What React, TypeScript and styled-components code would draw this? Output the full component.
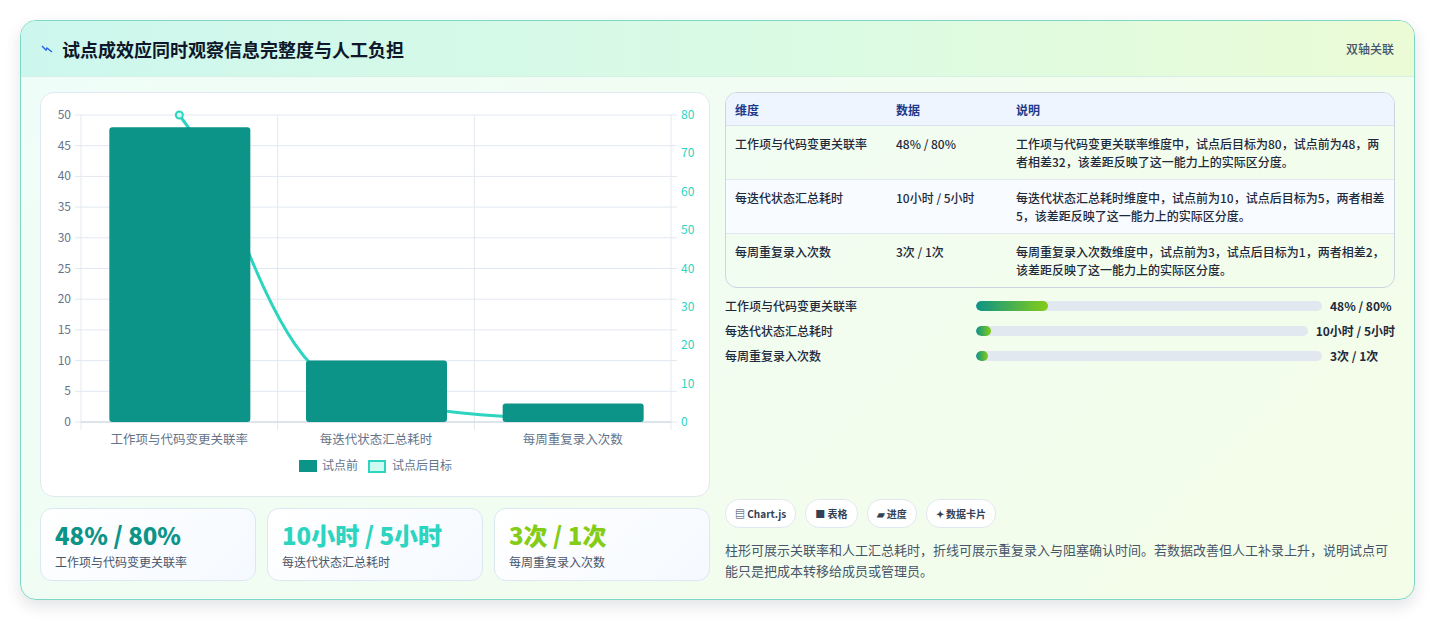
import styled, { createGlobalStyle } from 'styled-components';

const Global = createGlobalStyle`
  body {
    margin: 0;
    background: #f3f4f6;
    font-family: "Noto Sans CJK SC", "Noto Sans", sans-serif;
  }
`;

const rows = [
  {
    name: '工作项与代码变更关联率',
    data: '48% / 80%',
    desc: '工作项与代码变更关联率维度中，试点后目标为80，试点前为48，两者相差32，该差距反映了这一能力上的实际区分度。',
    fill: 72,
  },
  {
    name: '每迭代状态汇总耗时',
    data: '10小时 / 5小时',
    desc: '每迭代状态汇总耗时维度中，试点前为10，试点后目标为5，两者相差5，该差距反映了这一能力上的实际区分度。',
    fill: 15,
  },
  {
    name: '每周重复录入次数',
    data: '3次 / 1次',
    desc: '每周重复录入次数维度中，试点前为3，试点后目标为1，两者相差2，该差距反映了这一能力上的实际区分度。',
    fill: 12,
  },
];

const kpis = [
  { v: '48% / 80%', l: '工作项与代码变更关联率', c: '#0d9488' },
  { v: '10小时 / 5小时', l: '每迭代状态汇总耗时', c: '#2dd4bf' },
  { v: '3次 / 1次', l: '每周重复录入次数', c: '#84cc16' },
];

function Chart() {
  const x0 = 40, x1 = 630, y0 = 22, y1 = 329;
  const cw = (x1 - x0) / 3;
  const yl = (v: number) => y1 - (v / 50) * (y1 - y0);
  const yr = (v: number) => y1 - (v / 80) * (y1 - y0);
  const bars = [48, 10, 3];
  const cx = [0, 1, 2].map((i) => x0 + cw * (i + 0.5));
  const p = [80, 5, 1].map((v, i) => [cx[i], yr(v)]);
  return (
    <svg width="670" height="403" viewBox="0 0 670 403">
      {Array.from({ length: 11 }, (_, i) => (
        <g key={i}>
          <line x1={x0 - 6} x2={x1 + 6} y1={yl(i * 5)} y2={yl(i * 5)} stroke="#e2e8f0" />
          <text x={x0 - 10} y={yl(i * 5) + 4} fontSize="12" fill="#64748b" textAnchor="end">{i * 5}</text>
        </g>
      ))}
      {[0, 10, 20, 30, 40, 50, 60, 70, 80].map((v) => (
        <text key={v} x={x1 + 10} y={yr(v) + 4} fontSize="12" fill="#2dd4bf">{v}</text>
      ))}
      {[0, 1, 2, 3].map((i) => (
        <line key={i} x1={x0 + cw * i} x2={x0 + cw * i} y1={y0} y2={y1 + 8} stroke="#e2e8f0" />
      ))}
      <line x1={x0} x2={x1} y1={y1} y2={y1} stroke="#cbd5e1" />
      <path
        d={`M${p[0][0]},${p[0][1]} C${p[0][0] + 70},${p[0][1] + 90} ${p[1][0] - 110},${p[1][1] - 20} ${p[1][0]},${p[1][1]} C${p[1][0] + 80},${p[1][1] + 10} ${p[2][0] - 80},${p[2][1]} ${p[2][0]},${p[2][1]}`}
        fill="none"
        stroke="#2dd4bf"
        strokeWidth="3"
      />
      <circle cx={p[0][0]} cy={p[0][1]} r="3.5" fill="#ccfbf1" stroke="#2dd4bf" strokeWidth="2" />
      {bars.map((v, i) => (
        <rect key={i} x={cx[i] - 70} y={yl(v)} width="141" height={y1 - yl(v)} rx="3" fill="#0d9488" />
      ))}
      {rows.map((r, i) => (
        <text key={i} x={cx[i]} y={y1 + 22} fontSize="12.5" fill="#64748b" textAnchor="middle">{r.name}</text>
      ))}
      <rect x="258" y="367" width="18" height="12" fill="#0d9488" />
      <text x="281" y="377" fontSize="12" fill="#64748b">试点前</text>
      <rect x="328" y="368" width="16" height="11" fill="#ccfbf1" stroke="#2dd4bf" strokeWidth="2" />
      <text x="351" y="377" fontSize="12" fill="#64748b">试点后目标</text>
    </svg>
  );
}

export default function App() {
  return (
    <>
      <Global />
      <Page>
        <Card>
          <Header>
            <Title>
              <svg width="12" height="8" viewBox="0 0 12 8" style={{ marginRight: 9 }}>
                <path d="M1 1 L5 5 L6 3 L11 7" fill="none" stroke="#2563eb" strokeWidth="1.4" />
              </svg>
              试点成效应同时观察信息完整度与人工负担
            </Title>
            <Tag>双轴关联</Tag>
          </Header>
          <Body>
            <Col>
              <ChartBox>
                <Chart />
              </ChartBox>
              <Kpis>
                {kpis.map((k) => (
                  <Kpi key={k.l}>
                    <KpiValue color={k.c}>{k.v}</KpiValue>
                    <KpiLabel>{k.l}</KpiLabel>
                  </Kpi>
                ))}
              </Kpis>
            </Col>
            <Col>
              <Table>
                <colgroup>
                  <col style={{ width: 161 }} />
                  <col style={{ width: 120 }} />
                  <col />
                </colgroup>
                <thead>
                  <tr>
                    <Th>维度</Th>
                    <Th>数据</Th>
                    <Th>说明</Th>
                  </tr>
                </thead>
                <tbody>
                  {rows.map((r, i) => (
                    <Tr key={r.name} alt={i % 2 === 1}>
                      <Td>{r.name}</Td>
                      <Td>{r.data}</Td>
                      <Td>{r.desc}</Td>
                    </Tr>
                  ))}
                </tbody>
              </Table>
              <Progress>
                {rows.map((r) => (
                  <PRow key={r.name}>
                    <PLabel>{r.name}</PLabel>
                    <Track>
                      <Fill style={{ width: r.fill }} />
                    </Track>
                    <PValue>{r.data}</PValue>
                  </PRow>
                ))}
              </Progress>
              <Spacer />
              <Chips>
                <Chip>▤ Chart.js</Chip>
                <Chip>■ 表格</Chip>
                <Chip>▰ 进度</Chip>
                <Chip>✦ 数据卡片</Chip>
              </Chips>
              <Desc>
                柱形可展示关联率和人工汇总耗时，折线可展示重复录入与阻塞确认时间。若数据改善但人工补录上升，说明试点可能只是把成本转移给成员或管理员。
              </Desc>
            </Col>
          </Body>
        </Card>
      </Page>
    </>
  );
}

const Page = styled.div`
  padding: 20px 20px 21px 20px;
  background: #fff;
`;

const Card = styled.div`
  border: 1px solid #7dd9c6;
  border-radius: 16px;
  overflow: hidden;
  background: linear-gradient(135deg, #effdf9 0%, #f4fde8 100%);
  box-shadow: 0 6px 16px rgba(15, 23, 42, 0.12);
`;

const Header = styled.div`
  height: 55px;
  display: flex;
  align-items: center;
  justify-content: space-between;
  padding: 0 20px 0 20px;
  background: linear-gradient(90deg, #cdf7ee 0%, #dcfbe3 60%, #ebfbd6 100%);
  border-bottom: 1px solid #d5f1e6;
`;

const Title = styled.h1`
  margin: 0;
  font-size: 18px;
  font-weight: 700;
  color: #0f172a;
  display: flex;
  align-items: center;
`;

const Tag = styled.span`
  font-size: 12px;
  color: #475569;
  font-weight: 500;
`;

const Body = styled.div`
  display: grid;
  grid-template-columns: 670px 670px;
  gap: 15px;
  padding: 15px 19px 18px 19px;
`;

const Col = styled.div`
  display: flex;
  flex-direction: column;
`;

const ChartBox = styled.div`
  height: 403px;
  background: #fff;
  border: 1px solid #e2e8f0;
  border-radius: 14px;
  overflow: hidden;
`;

const Kpis = styled.div`
  display: grid;
  grid-template-columns: repeat(3, 1fr);
  gap: 11px;
  margin-top: 11px;
`;

const Kpi = styled.div`
  height: 73px;
  box-sizing: border-box;
  padding: 10px 14px;
  background: linear-gradient(135deg, #fff, #f5f9ff);
  border: 1px solid #dbe7f3;
  border-radius: 12px;
`;

const KpiValue = styled.div<{ color: string }>`
  font-size: 24px;
  font-weight: 800;
  line-height: 32px;
  color: ${(p) => p.color};
`;

const KpiLabel = styled.div`
  font-size: 12px;
  color: #475569;
  margin-top: 2px;
`;

const Table = styled.table`
  width: 100%;
  table-layout: fixed;
  border-collapse: separate;
  border-spacing: 0;
  border: 1px solid #cbd5e1;
  border-radius: 12px;
  overflow: hidden;
  font-size: 12px;
  font-weight: 500;
  color: #1e293b;
`;

const Th = styled.th`
  text-align: left;
  height: 32px;
  padding: 0 9px;
  background: #eef5ff;
  color: #1e3a8a;
  font-weight: 600;
  border-bottom: 1px solid #d6e2ee;
`;

const Tr = styled.tr<{ alt: boolean }>`
  background: ${(p) => (p.alt ? '#f8fbff' : 'transparent')};
`;

const Td = styled.td`
  vertical-align: top;
  padding: 9px 9px 8px 9px;
  line-height: 18px;
  border-bottom: 1px solid #e2e8f0;
  tr:last-child > & {
    border-bottom: none;
  }
`;

const Progress = styled.div`
  display: flex;
  flex-direction: column;
  gap: 8px;
  margin-top: 9px;
`;

const PRow = styled.div`
  display: flex;
  align-items: center;
  gap: 8px;
  height: 17px;
  font-size: 12px;
  font-weight: 500;
  color: #1e293b;
`;

const PLabel = styled.span`
  flex: 0 0 243px;
`;

const Track = styled.div`
  flex: 1;
  height: 10px;
  background: #e2e8f0;
  border-radius: 5px;
  overflow: hidden;
`;

const Fill = styled.div`
  height: 100%;
  border-radius: 5px;
  background: linear-gradient(90deg, #0d9488, #84cc16);
`;

const PValue = styled.span`
  font-weight: 700;
  white-space: nowrap;
  min-width: 65px;
`;

const Spacer = styled.div`
  flex: 1;
`;

const Chips = styled.div`
  display: flex;
  gap: 9px;
`;

const Chip = styled.span`
  height: 27px;
  display: inline-flex;
  align-items: center;
  padding: 0 9px;
  background: #fff;
  border: 1px solid #e2e8f0;
  border-radius: 14px;
  font-size: 10px;
  font-weight: 600;
  color: #334155;
`;

const Desc = styled.p`
  margin: 11px 0 0 0;
  font-size: 13px;
  line-height: 21px;
  color: #475569;
`;
